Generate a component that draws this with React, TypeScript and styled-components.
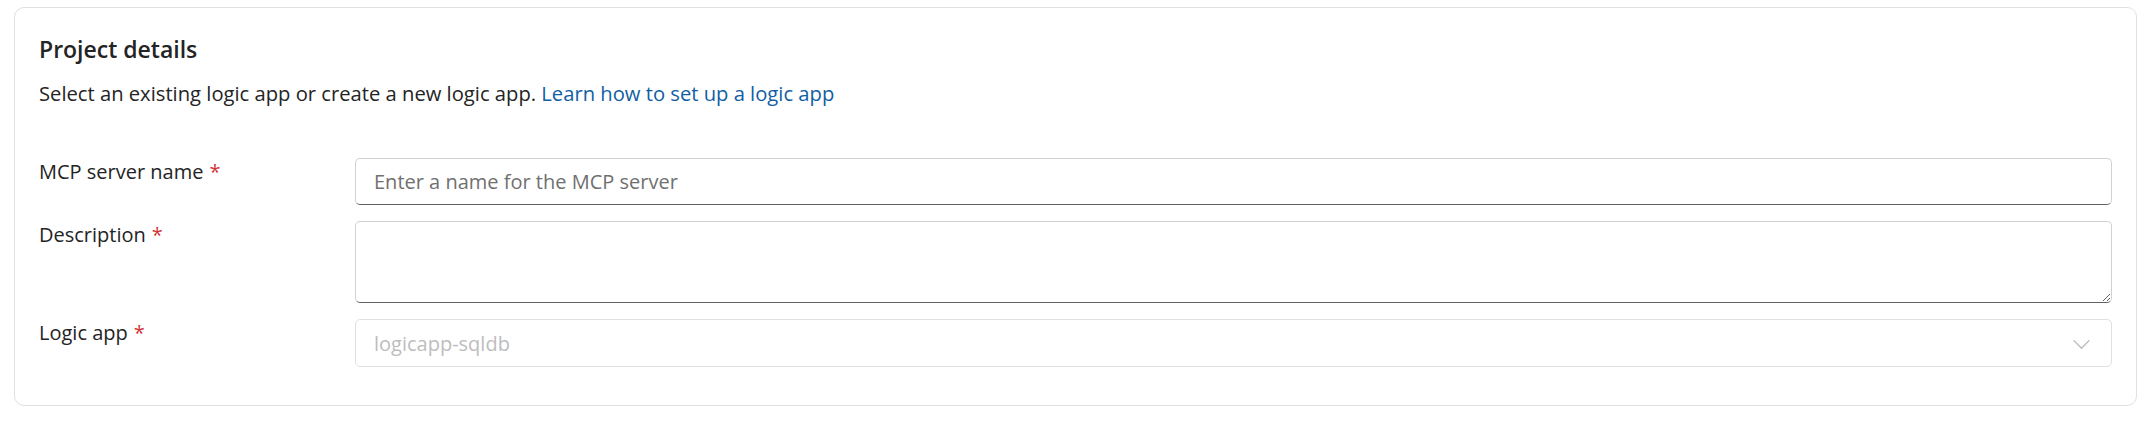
import styled, { createGlobalStyle } from 'styled-components'

const GlobalStyle = createGlobalStyle`
  html, body {
    margin: 0;
    padding: 0;
    background: #ffffff;
  }

  body {
    font-family: 'Open Sans', 'Noto Sans', sans-serif;
    color: #242424;
  }
`

const Page = styled.div`
  padding: 7px 9px 0 14px;
`

const Card = styled.section`
  border: 1px solid #e0e0e0;
  border-radius: 10px;
  padding: 26px 24px 38px 24px;
  background: #ffffff;
`

const Title = styled.h2`
  margin: 0;
  font-size: 23px;
  line-height: 30px;
  font-weight: 600;
  color: #242424;
`

const Intro = styled.p`
  margin: 15px 0 0 0;
  font-size: 20.2px;
  line-height: 28px;
  color: #242424;
`

const Link = styled.a`
  color: #115ea3;
  text-decoration: none;

  &:hover {
    text-decoration: underline;
  }
`

const Fields = styled.div`
  margin-top: 51px;
  display: grid;
  grid-template-columns: 316px 1fr;
  row-gap: 16px;
`

const Label = styled.label`
  font-size: 20px;
  line-height: 28px;
  color: #242424;
`

const Required = styled.span`
  color: #d13438;
  padding-left: 6px;
`

const fieldBorder = `
  box-sizing: border-box;
  width: 100%;
  border: 1px solid #d1d1d1;
  border-bottom-color: #616161;
  border-radius: 5px;
  background: #ffffff;
  font-family: 'Open Sans', 'Noto Sans', sans-serif;
  font-size: 20px;
  color: #242424;
  outline: none;

  &::placeholder {
    color: #707070;
  }
`

const TextInput = styled.input`
  ${fieldBorder}
  height: 47px;
  padding: 0 18px;
`

const TextArea = styled.textarea`
  ${fieldBorder}
  display: block;
  height: 82px;
  padding: 8px 18px;
  resize: vertical;
`

const Dropdown = styled.div<{ $disabled?: boolean }>`
  box-sizing: border-box;
  height: 48px;
  display: flex;
  align-items: center;
  justify-content: space-between;
  padding: 0 16px 0 18px;
  border: 1px solid ${(p) => (p.$disabled ? '#e0e0e0' : '#d1d1d1')};
  border-radius: 5px;
  font-size: 20px;
  color: ${(p) => (p.$disabled ? '#bdbdbd' : '#242424')};
  cursor: ${(p) => (p.$disabled ? 'not-allowed' : 'pointer')};
`

const Chevron = styled.svg`
  width: 27px;
  height: 27px;
  flex-shrink: 0;
  color: #bdbdbd;
`

function ChevronDown() {
  return (
    <Chevron viewBox="0 0 20 20" fill="currentColor">
      <path d="M15.85 7.65c.2.2.2.5 0 .7l-5.46 5.49a.55.55 0 0 1-.78 0L4.15 8.35a.5.5 0 1 1 .7-.7L10 12.8l5.15-5.16c.2-.2.5-.2.7 0Z" />
    </Chevron>
  )
}

export default function App() {
  return (
    <>
      <GlobalStyle />
      <Page>
        <Card>
          <Title>Project details</Title>
          <Intro>
            Select an existing logic app or create a new logic app.{' '}
            <Link href="#">Learn how to set up a logic app</Link>
          </Intro>

          <Fields>
            <Label htmlFor="mcp-name">
              MCP server name<Required>*</Required>
            </Label>
            <TextInput id="mcp-name" placeholder="Enter a name for the MCP server" />

            <Label htmlFor="mcp-description">
              Description<Required>*</Required>
            </Label>
            <TextArea id="mcp-description" />

            <Label>
              Logic app<Required>*</Required>
            </Label>
            <Dropdown $disabled>
              <span>logicapp-sqldb</span>
              <ChevronDown />
            </Dropdown>
          </Fields>
        </Card>
      </Page>
    </>
  )
}
